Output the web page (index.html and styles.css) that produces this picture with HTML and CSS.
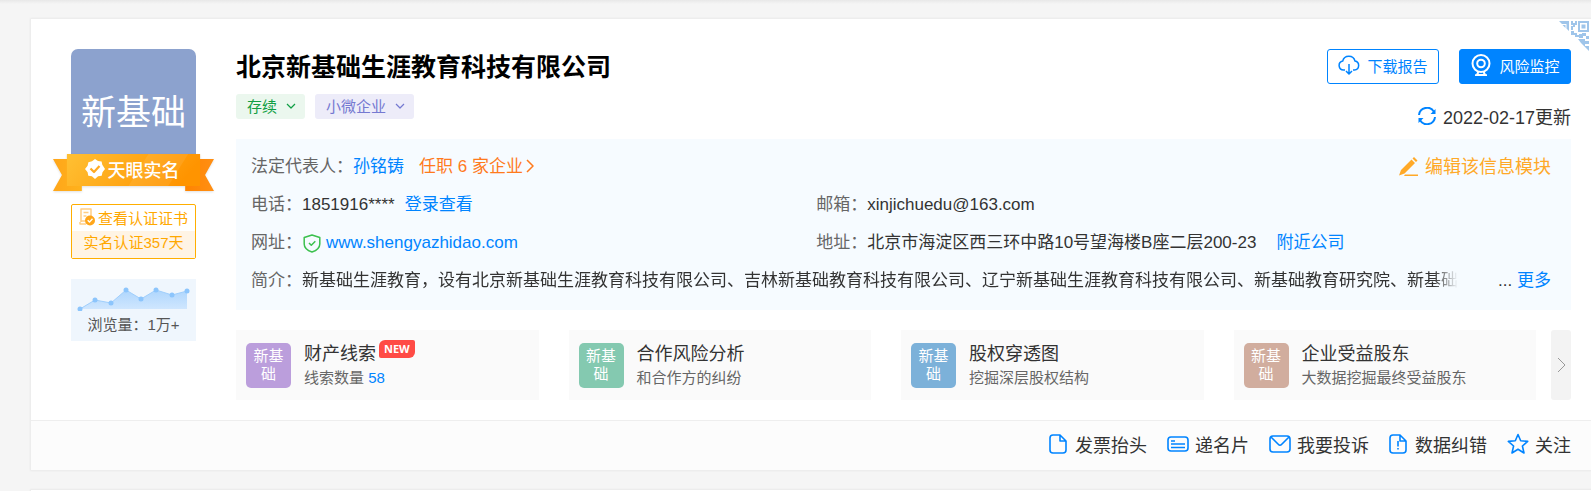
FILE: index.html
```html
<!DOCTYPE html>
<html lang="zh-CN">
<head>
<meta charset="utf-8">
<title>北京新基础生涯教育科技有限公司</title>
<link rel="stylesheet" href="styles.css">
</head>
<body>
<main class="page">
  <section class="card">
    <svg class="qr" viewBox="0 0 30 30" aria-hidden="true">
      <path d="M0 0h10v10L7.500 7.500V3H3zM3.500 4h3v3zM12 0h2v2h2v-2h2v4h-2v2h-2v3h-2V5h2V4h-2zM12 10h3v2h3v2h2v2h-4v-2h-4zM19 0h11v11H19zM21 2v7h7V2zM22.500 3.500h4v4h-4zM20 13h3v-1h4v3h-3v2h-4zM27 15h3v3h-3zM19 18h7v2h4v3h-4v2h4v5L22 22z" fill-rule="evenodd"/>
    </svg>
    <div class="overview">
      <aside class="side">
        <div class="avatar">新基础</div>
        <div class="ribbon">
          <svg class="ribbon-shape" viewBox="0 0 162 38" aria-hidden="true">
            <defs>
              <linearGradient id="band" x1="0" x2="1" y1="0" y2="0.2"><stop offset="0" stop-color="#ffc033"/><stop offset="1" stop-color="#ff9400"/></linearGradient>
              <linearGradient id="tailL"><stop offset="0" stop-color="#ffa61a"/><stop offset="1" stop-color="#ffb21c"/></linearGradient>
              <linearGradient id="tailR"><stop offset="0" stop-color="#ff8400"/><stop offset="1" stop-color="#ff8f14"/></linearGradient>
            </defs>
            <path d="M0 5h29v32H0l9-16z" fill="url(#tailL)"/>
            <path d="M162 5h-29v32h29l-9-16z" fill="url(#tailR)"/>
            <path d="M14 0h134v32H14z" fill="url(#band)"/>
            <path d="M96 0h40l-20 32H76z" fill="#fff" opacity=".08"/>
          </svg>
          <svg class="ribbon-badge" viewBox="0 0 20 20" aria-hidden="true">
            <path d="M10 0l3 2 3.600.4.7 3.400L20 10l-2.500 3.200-.8 3.500-3.600.5L10 20l-3.100-2.700-3.600-.5-.7-3.500L0 10l2.600-3.200.8-3.500L7 2.300z" fill="#fff"/>
            <path d="M5.500 9.500l3.500 3.500 5.500-6" fill="none" stroke="#ffa920" stroke-width="2.200"/>
          </svg>
          <span class="ribbon-text">天眼实名</span>
        </div>
        <a class="cert" href="#">
          <span class="cert-top">
            <svg class="cert-icon" viewBox="0 0 16 18" aria-hidden="true">
              <path d="M2 14V1h10v7M1 14v2h6M2 13h4" fill="none" stroke="#ffce85" stroke-width="1.500"/>
              <path d="M4.500 4.500h5M4.500 8h3" stroke="#ffce85" stroke-width="1.500"/>
              <circle cx="11" cy="12.500" r="5" fill="#ffa61a"/>
              <path d="M8.700 12.300l1.800 1.800 3-3.300" fill="none" stroke="#fff" stroke-width="1.400"/>
            </svg>查看认证证书</span>
          <span class="cert-bottom">实名认证357天</span>
        </a>
        <div class="views">
          <svg class="views-chart" viewBox="0 0 125 32" aria-hidden="true">
            <defs><linearGradient id="area" x2="0" y2="1"><stop offset="0" stop-color="#aed6fd"/><stop offset="1" stop-color="#cfe6fe"/></linearGradient></defs>
            <path d="M9 30l15-9 16 3 15-13 15 9 15-9 16 5 15-4v18z" fill="url(#area)"/>
            <path d="M9 30l15-9 16 3 15-13 15 9 15-9 16 5 15-4" fill="none" stroke="#a0cffc"/>
            <g fill="#8cc5fc"><circle cx="9" cy="30" r="2.500"/><circle cx="24" cy="21" r="2.500"/><circle cx="40" cy="24" r="2.500"/><circle cx="55" cy="11" r="2.500"/><circle cx="70" cy="20" r="2.500"/><circle cx="85" cy="11" r="2.500"/><circle cx="101" cy="16" r="2.500"/><circle cx="116" cy="12" r="2.500"/></g>
          </svg>
          <span class="views-text">浏览量：1万+</span>
        </div>
      </aside>
      <div class="main">
        <header class="head">
          <div class="head-left">
            <h1 class="title">北京新基础生涯教育科技有限公司</h1>
            <div class="tags">
              <button class="tag tag-green" type="button">存续<svg class="caret" viewBox="0 0 10 6" aria-hidden="true"><path d="M1 1l4 4 4-4"/></svg></button>
              <button class="tag tag-purple" type="button">小微企业<svg class="caret" viewBox="0 0 10 6" aria-hidden="true"><path d="M1 1l4 4 4-4"/></svg></button>
            </div>
          </div>
          <div class="head-right">
            <div class="actions">
              <button class="btn btn-outline" type="button">
                <svg class="btn-icon" viewBox="0 0 22 22" aria-hidden="true"><path d="M7 16H5.500A4.500 4.500 0 0 1 4.700 7.100 6.300 6.300 0 0 1 17 7.100 4.500 4.500 0 0 1 16.500 16H15M11 10v9.500M8 17l3 3 3-3"/></svg>下载报告</button>
              <button class="btn btn-solid" type="button">
                <svg class="btn-icon btn-icon-bold" viewBox="0 0 22 22" aria-hidden="true"><circle cx="11" cy="9.500" r="8.500"/><circle cx="11" cy="9.500" r="3.800"/><path d="M8.500 17.500L7 21h8l-1.500-3.500M5 21.200h12"/></svg>风险监控</button>
            </div>
            <button class="updated" type="button">
              <svg class="refresh" viewBox="0 0 18 18" aria-hidden="true"><path d="M1 8A8 8 0 0 1 16 5M17 10A8 8 0 0 1 2 13"/><path class="refresh-tip" d="M17.500 2v5h-5zM.5 16v-5h5z"/></svg>2022-02-17更新</button>
          </div>
        </header>
        <div class="info">
          <div class="row row-split">
            <div><span class="label">法定代表人：</span><a class="link" href="#">孙铭铸</a><a class="jobs" href="#">任职 6 家企业<svg class="jobs-arrow" viewBox="0 0 8 14" aria-hidden="true"><path d="M1 1l6 6-6 6"/></svg></a></div>
            <a class="edit" href="#"><svg class="edit-icon" viewBox="0 0 20 20" aria-hidden="true"><path d="M0 18.500l2-5.500L12.500 2.500l3.500 3.500L5.500 16.500zM13.500 1.500L15 0l3.500 3.500L17 5zM6 17.500h13V19H5z"/></svg>编辑该信息模块</a>
          </div>
          <div class="row row-cols">
            <div><span class="label">电话：</span>1851916****<a class="link link-after" href="#">登录查看</a></div>
            <div><span class="label">邮箱：</span>xinjichuedu@163.com</div>
          </div>
          <div class="row row-cols">
            <div class="site"><span class="label">网址：</span><svg class="shield" viewBox="0 0 18 19" aria-hidden="true"><path d="M9 1l7.800 2.500V10c0 4-3.300 6.500-7.800 8-4.500-1.500-7.800-4-7.800-8V3.500z"/><path d="M6 9l2.300 2.300L12.300 7.300"/></svg><a class="link" href="#">www.shengyazhidao.com</a></div>
            <div><span class="label">地址：</span>北京市海淀区西三环中路10号望海楼B座二层200-23<a class="link nearby" href="#">附近公司</a></div>
          </div>
          <div class="row intro">
            <span class="label">简介：</span>
            <span class="intro-text">新基础生涯教育，设有北京新基础生涯教育科技有限公司、吉林新基础教育科技有限公司、辽宁新基础生涯教育科技有限公司、新基础教育研究院、新基础</span>
            <span class="more">... <a class="link" href="#">更多</a></span>
          </div>
        </div>
        <div class="tiles">
          <a class="tile" href="#"><span class="logo logo-purple">新基<br>础</span><span class="tile-body"><span class="tile-title">财产线索<span class="new">NEW</span></span><span class="tile-sub">线索数量 <span class="num">58</span></span></span></a>
          <a class="tile" href="#"><span class="logo logo-green">新基<br>础</span><span class="tile-body"><span class="tile-title">合作风险分析</span><span class="tile-sub">和合作方的纠纷</span></span></a>
          <a class="tile" href="#"><span class="logo logo-blue">新基<br>础</span><span class="tile-body"><span class="tile-title">股权穿透图</span><span class="tile-sub">挖掘深层股权结构</span></span></a>
          <a class="tile" href="#"><span class="logo logo-tan">新基<br>础</span><span class="tile-body"><span class="tile-title">企业受益股东</span><span class="tile-sub">大数据挖掘最终受益股东</span></span></a>
          <button class="next" type="button" aria-label="下一组"><svg class="next-icon" viewBox="0 0 9 16" aria-hidden="true"><path d="M1 1l7 7-7 7"/></svg></button>
        </div>
      </div>
    </div>
    <footer class="foot">
      <button class="foot-item" type="button"><svg class="foot-icon icon-doc" viewBox="0 0 18 20" aria-hidden="true"><path d="M4 1h7l6 6v9a3 3 0 0 1-3 3H4a3 3 0 0 1-3-3V4a3 3 0 0 1 3-3zM11 1v6h6"/></svg>发票抬头</button>
      <button class="foot-item" type="button"><svg class="foot-icon" viewBox="0 0 22 20" aria-hidden="true"><rect x="1" y="3" width="20" height="14" rx="3"/><path d="M4 7h4M4 10h14M4 13.500h14"/></svg>递名片</button>
      <button class="foot-item" type="button"><svg class="foot-icon" viewBox="0 0 22 20" aria-hidden="true"><rect x="1" y="2" width="20" height="16" rx="3"/><path d="M2 3l7.500 7.500a2 2 0 0 0 3 0L20 3"/></svg>我要投诉</button>
      <button class="foot-item" type="button"><svg class="foot-icon icon-doc" viewBox="0 0 18 20" aria-hidden="true"><path d="M4 1h7l6 6v9a3 3 0 0 1-3 3H4a3 3 0 0 1-3-3V4a3 3 0 0 1 3-3zM11 1v6h6M9 7v5.500M9 14v1.500"/></svg>数据纠错</button>
      <button class="foot-item" type="button"><svg class="foot-icon" viewBox="0 0 22 22" aria-hidden="true"><path d="M11 1.500l2.700 6.300 7 .6-5.300 4.600 1.600 7-6-3.700L5 20l1.600-7-5.300-4.600 7-.6z"/></svg>关注</button>
    </footer>
  </section>
  <section class="card card-next"></section>
</main>
</body>
</html>
```
FILE: styles.css
```css
* { box-sizing: border-box; }
body {
  margin: 0;
  background: #f5f5f5;
  color: #333;
  font-family: "Liberation Sans", "Noto Sans CJK SC", sans-serif;
  font-size: 17px;
}
a { text-decoration: none; color: inherit; }
button { margin: 0; padding: 0; border: 0; background: none; color: inherit; font: inherit; cursor: pointer; }
svg { flex: none; fill: none; stroke-linejoin: round; }

.page {
  padding: 19px 0 0 31px;
  background: linear-gradient(#e8e8e8, #f5f5f5 4px);
}
.card {
  position: relative;
  background: #fff;
  box-shadow: 0 0 2px 1px rgba(0, 0, 0, .05);
}
.card-next { margin-top: 20px; min-height: 1px; }
.qr { position: absolute; top: 2px; right: 2px; width: 30px; height: 30px; fill: #9fc5ea; }
.overview { display: flex; gap: 40px; padding: 30px 20px 20px 40px; }

.side { flex: none; width: 125px; }
.avatar {
  height: 105px;
  padding-top: 39px;
  border-radius: 7px 7px 0 0;
  background: #8ca2ce;
  color: #fff;
  font-size: 35px;
  line-height: 50px;
  text-align: center;
}
.ribbon {
  position: relative;
  display: flex;
  align-items: center;
  justify-content: center;
  gap: 3px;
  height: 32px;
  margin: 0 -18px;
  padding: 0 3px 2px 0;
  color: #fff;
  font-size: 18px;
  font-weight: 500;
}
.ribbon-shape { position: absolute; top: 0; left: 0; width: 100%; height: 38px; filter: drop-shadow(0 1px 1px rgba(0, 0, 0, .12)); }
.ribbon-badge { position: relative; width: 20px; height: 20px; }
.ribbon-text { position: relative; }
.cert {
  display: block;
  margin-top: 18px;
  border: 1px solid #ffae00;
  border-radius: 2px;
  color: #ffa800;
  font-size: 15px;
  text-align: center;
}
.cert-top { display: flex; align-items: center; justify-content: center; gap: 3px; height: 26px; padding-bottom: 2px; }
.cert-icon { width: 16px; height: 18px; }
.cert-bottom { display: block; height: 27px; line-height: 24px; background: #fff4e5; }
.views { margin-top: 20px; height: 62px; background: #eff6fd; color: #555; font-size: 15px; line-height: 27px; text-align: center; }
.views-chart { display: block; width: 100%; height: 32px; }
.views-text { display: block; }

.main { flex: 1; min-width: 0; }
.head { display: flex; justify-content: space-between; min-height: 90px; }
.title { margin: 0; color: #000; font-size: 25px; line-height: 36px; font-weight: 700; }
.tags { display: flex; gap: 10px; margin-top: 9px; }
.tag { display: flex; align-items: center; gap: 9px; height: 25px; padding: 0 9px 2px 11px; border-radius: 3px; font-size: 15px; }
.tag-green { background: #ebf7ee; color: #109e44; }
.tag-purple { background: #edecf9; color: #7579d1; }
.caret { width: 10px; height: 6px; stroke: currentColor; stroke-width: 1.2; }
.head-right { display: flex; flex-direction: column; align-items: flex-end; }
.actions { display: flex; gap: 20px; }
.btn { display: flex; align-items: center; justify-content: center; gap: 7px; width: 112px; height: 35px; padding-bottom: 3px; border: 1px solid #0084ff; border-radius: 3px; font-size: 15px; }
.btn-outline { color: #0084ff; }
.btn-solid { background: #0084ff; color: #fff; }
.btn-icon { width: 22px; height: 22px; stroke: currentColor; stroke-width: 1.5; }
.btn-icon-bold { stroke-width: 2; }
.updated { display: flex; align-items: center; gap: 7px; height: 25px; margin-top: 19px; font-size: 18px; }
.refresh { width: 18px; height: 18px; stroke: #0084ff; stroke-width: 2; }
.refresh-tip { fill: #0084ff; stroke: none; }

.info { padding: 9px 20px 10px 15px; background: #f6fbff; }
.row { min-height: 38px; line-height: 38px; white-space: nowrap; }
.row-split { display: flex; justify-content: space-between; }
.row-cols { display: grid; grid-template-columns: 10fr 13fr; }
.label { color: #666; }
.link { color: #0084ff; }
.link-after { margin-left: 10px; }
.nearby { margin-left: 20px; }
.jobs { margin-left: 15px; color: #ff7a1c; }
.jobs-arrow { width: 8px; height: 14px; margin-left: 3px; vertical-align: -1px; stroke: currentColor; stroke-width: 1.5; }
.edit { display: flex; align-items: center; gap: 6px; color: #ffa928; font-size: 18px; }
.edit-icon { width: 20px; height: 20px; fill: currentColor; }
.site { display: flex; align-items: center; }
.shield { width: 18px; height: 19px; margin: 0 5px 0 1px; stroke: #3cc04e; stroke-width: 1.5; }
.intro { display: flex; }
.intro .label { flex: none; }
.intro-text {
  flex: 0 1 auto;
  min-width: 0;
  overflow: hidden;
  -webkit-mask-image: linear-gradient(to left, transparent, #000 24px);
  mask-image: linear-gradient(to left, transparent, #000 24px);
}
.more { flex: none; margin-left: auto; padding-left: 10px; }

.tiles { display: flex; gap: 30px; margin-top: 20px; }
.tile { display: flex; flex: 1; align-items: flex-start; gap: 13px; min-width: 0; height: 70px; padding: 13px 10px 0; background: #fafafa; }
.logo { flex: none; width: 45px; height: 45px; padding-top: 4px; border-radius: 5px; color: #fff; font-size: 15px; line-height: 18px; text-align: center; }
.logo-purple { background: #bb9edc; }
.logo-green { background: #84c9b0; }
.logo-blue { background: #7cb1d9; }
.logo-tan { background: #d1ad9e; }
.tile-body { display: flex; flex-direction: column; }
.tile-title { display: flex; align-items: center; gap: 3px; height: 18px; margin-bottom: 4px; font-size: 18px; white-space: nowrap; }
.new { align-self: flex-start; margin-top: -3px; padding: 0 5px; border-radius: 6px 2px 6px 2px; background: #ff4b45; color: #fff; font-family: "Open Sans", sans-serif; font-size: 11px; font-weight: 700; line-height: 18px; }
.tile-sub { height: 25px; line-height: 25px; color: #666; font-size: 15px; white-space: nowrap; }
.num { color: #0084ff; }
.next { display: flex; align-items: center; justify-content: center; width: 20px; height: 70px; margin-left: -15px; border-radius: 3px; background: #f3f3f3; }
.next-icon { width: 9px; height: 16px; stroke: #999; }

.foot { display: flex; justify-content: flex-end; gap: 20px; padding: 0 20px; border-top: 1px solid #eee; background: #fcfcfc; }
.foot-item { display: flex; align-items: center; gap: 6px; height: 49px; padding-bottom: 3px; font-size: 18px; }
.foot-icon { width: 22px; height: 22px; stroke: #0084ff; stroke-width: 1.6; }
.icon-doc { width: 18px; height: 20px; margin-right: 2px; }
```
